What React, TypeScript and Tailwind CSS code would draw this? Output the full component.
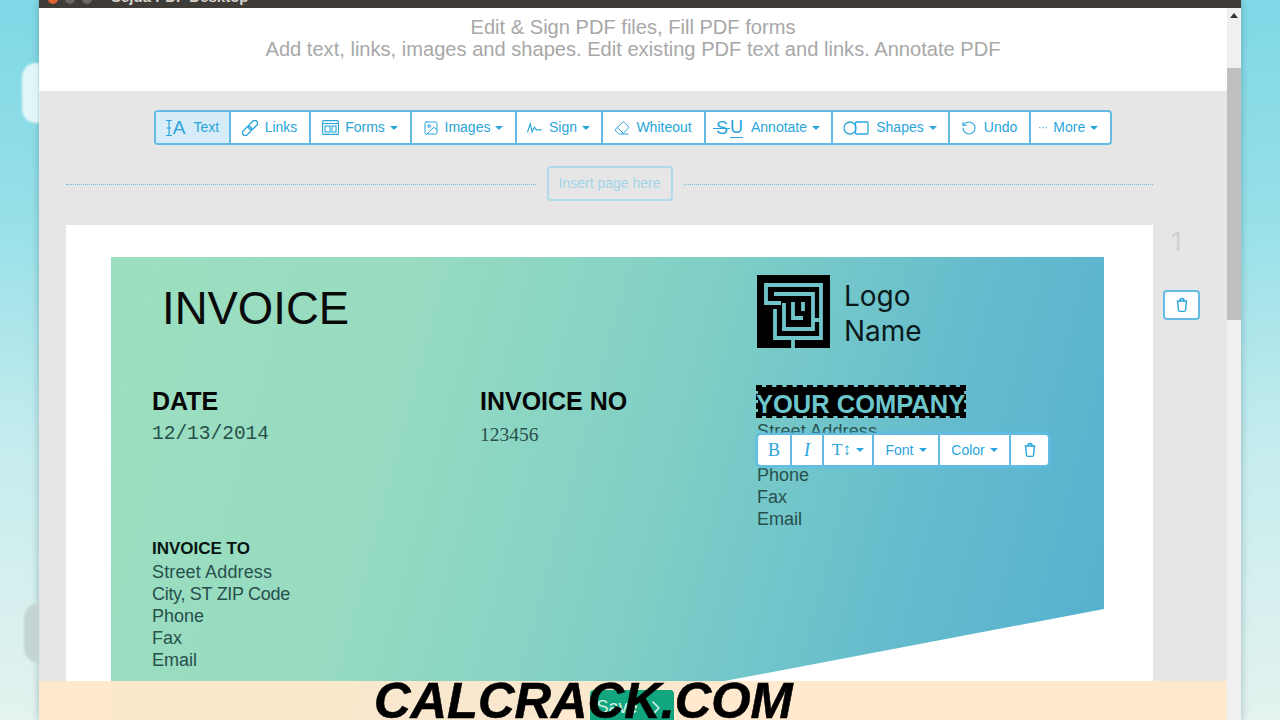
import { ChevronRight, Eraser, Image, RotateCcw } from "lucide-react";
import type { ReactNode } from "react";

function Caret() {
  return <span className="ml-[5px] inline-block h-0 w-0 border-x-[4px] border-t-[4px] border-x-transparent border-t-[#2aa5dc]" />;
}

function TrashIcon({ className }: { className?: string }) {
  return (
    <svg viewBox="0 0 16 18" fill="none" stroke="currentColor" strokeWidth="1.6" className={className}>
      <path d="M2 4.5h12M5.5 4.5c0-2 1-3 2.5-3s2.5 1 2.5 3M3 4.5l1 10.5c.1.8.7 1.3 1.5 1.3h5c.8 0 1.4-.5 1.5-1.3l1-10.5" />
    </svg>
  );
}

function TextIcon() {
  return (
    <span className="flex items-center text-[19px] leading-none">
      <svg viewBox="0 0 8 18" fill="none" stroke="currentColor" strokeWidth="1.2" className="h-[18px] w-[8px]">
        <path d="M1 1.5h6M4 1.5v15M1 16.5h6M2 9h4" />
      </svg>
      <span>A</span>
    </span>
  );
}

function LinkIcon() {
  return (
    <svg viewBox="0 0 16 16" fill="none" stroke="currentColor" strokeWidth="1.3" className="h-[16px] w-[16px]">
      <g transform="rotate(-45 8 8)">
        <rect x="-1.5" y="5.2" width="10.5" height="5.6" rx="2.8" />
        <rect x="7" y="5.2" width="10.5" height="5.6" rx="2.8" />
      </g>
    </svg>
  );
}

function FormsIcon() {
  return (
    <svg viewBox="0 0 17 15" fill="none" stroke="currentColor" strokeWidth="1.1" className="h-[15px] w-[17px]">
      <rect x="0.6" y="0.6" width="15.8" height="13.8" rx="1" />
      <path d="M0.6 3.5h15.8" />
      <rect x="3" y="6" width="5" height="6" />
      <rect x="10" y="6" width="4" height="6" />
    </svg>
  );
}

function SignIcon() {
  return (
    <svg viewBox="0 0 16 12" fill="none" stroke="currentColor" strokeWidth="1.2" className="h-[12px] w-[15px]">
      <path d="M0.5 10.5 3.5 1.5 5.5 10 8 5l2 3h5.5" />
    </svg>
  );
}

function AnnotateIcon() {
  return (
    <span className="relative flex items-center text-[18px] leading-none">
      <span className="relative">
        S<span className="absolute left-[-3px] right-[-2px] top-[9px] h-px bg-[#2aa5dc]" />
      </span>
      <span className="ml-[2px] border-b border-[#2aa5dc] pb-[1px]">U</span>
    </span>
  );
}

function ShapesIcon() {
  return (
    <svg viewBox="0 0 26 14" fill="none" stroke="currentColor" strokeWidth="1.3" className="h-[14px] w-[26px]">
      <circle cx="7" cy="7" r="6" />
      <rect x="12.5" y="1" width="12.5" height="12" rx="1" />
    </svg>
  );
}

type ToolItem = { label: string; icon: ReactNode; caret?: boolean; width: string; active?: boolean; gap: string };

const tools: ToolItem[] = [
  { label: "Text", icon: <TextIcon />, width: "w-[75px]", active: true, gap: "gap-[8px]" },
  { label: "Links", icon: <LinkIcon />, width: "w-[80px]", gap: "gap-[7px]" },
  { label: "Forms", icon: <FormsIcon />, caret: true, width: "w-[101px]", gap: "gap-[6px]" },
  { label: "Images", icon: <Image size={16} strokeWidth={1.5} />, caret: true, width: "w-[105px]", gap: "gap-[6px]" },
  { label: "Sign", icon: <SignIcon />, caret: true, width: "w-[86px]", gap: "gap-[7px]" },
  { label: "Whiteout", icon: <Eraser size={16} strokeWidth={1.5} />, width: "w-[103px]", gap: "gap-[6px]" },
  { label: "Annotate", icon: <AnnotateIcon />, caret: true, width: "w-[127px]", gap: "gap-[8px]" },
  { label: "Shapes", icon: <ShapesIcon />, caret: true, width: "w-[117px]", gap: "gap-[7px]" },
  { label: "Undo", icon: <RotateCcw size={16} strokeWidth={1.6} />, width: "w-[81px]", gap: "gap-[7px]" },
  { label: "More", icon: <span className="text-[11px] leading-none tracking-[-0.5px]">···</span>, caret: true, width: "w-[79px] pr-[4px]", gap: "gap-[6px]" },
];

function Toolbar() {
  return (
    <div className="flex h-[35px] w-[958px] items-stretch overflow-hidden rounded-[4px] border-2 border-[#62bce4] bg-white text-[14px] text-[#2aa5dc]">
      {tools.map((t) => (
        <div
          key={t.label}
          className={`flex shrink-0 items-center justify-center border-r-2 border-[#62bce4] last:border-r-0 ${t.gap} ${t.width} ${t.active ? "bg-[#d6ecf8]" : ""}`}
        >
          {t.icon}
          <span className="flex items-center">
            {t.label}
            {t.caret && <Caret />}
          </span>
        </div>
      ))}
    </div>
  );
}

function FloatingBar() {
  const cell = "flex items-center justify-center border-r-2 border-[#62bce4] last:border-r-0";
  return (
    <div className="absolute left-[645px] top-[176px] flex h-[34px] w-[294px] items-stretch overflow-hidden rounded-[5px] border-2 border-[#62bce4] bg-white text-[14px] text-[#2aa5dc] shadow-[0_0_4px_#5cc0ea]">
      <div className={`${cell} w-[34px] font-['Liberation_Serif',serif] text-[18px]`}>B</div>
      <div className={`${cell} w-[32px] font-['Liberation_Serif',serif] text-[18px] italic`}>I</div>
      <div className={`${cell} w-[50px] text-[15px]`}>
        <span className="font-['Liberation_Serif',serif] text-[17px]">T↕</span>
        <Caret />
      </div>
      <div className={`${cell} w-[66px]`}>Font<Caret /></div>
      <div className={`${cell} w-[71px]`}>Color<Caret /></div>
      <div className={`${cell} flex-1`}>
        <TrashIcon className="h-[16px] w-[14px]" />
      </div>
    </div>
  );
}

function LogoMark() {
  return (
    <svg viewBox="0 0 73 73" className="h-[73px] w-[73px] shrink-0">
      <rect width="73" height="73" fill="#000" />
      <g fill="none" stroke="#6fc6ca" strokeWidth="3.8">
        <path d="M36 73V63H64V10H9V28H24" />
        <path d="M18 34V63H36" />
        <path d="M17 19H56V54H27V28" />
        <path d="M56 45H64" />
        <path d="M36 27V43H46" />
        <path d="M46 27V36" />
      </g>
    </svg>
  );
}

const bodyText = "text-[18px] leading-[22px] text-[#27504c]";

export default function App() {
  return (
    <div className="relative flex h-[720px] w-[1280px] overflow-hidden bg-[linear-gradient(180deg,#7fd8e6_0%,#97e0e8_30%,#c5ecee_62%,#e4f3ef_100%)] font-['Liberation_Sans',Arial,sans-serif]">
      <div className="flex w-[39px] shrink-0 flex-col items-end pt-[63px]">
        <div className="h-[60px] w-[17px] rounded-l-[14px] bg-white/75 blur-[1px]" />
        <div className="mt-[480px] h-[60px] w-[15px] rounded-l-full bg-[#c4d4d2] blur-[1px]" />
      </div>

      <div className="flex w-[1202px] shrink-0 flex-col shadow-[0_0_8px_rgba(60,100,110,0.4)]">
        <div className="flex h-[8px] shrink-0 items-start gap-[7px] bg-[#3f3c38] pl-[9px]">
          <span className="mt-[-6px] h-[10px] w-[10px] rounded-full bg-[#e0622e]" />
          <span className="mt-[-6px] h-[10px] w-[10px] rounded-full bg-[#6b6862]" />
          <span className="mt-[-6px] h-[10px] w-[10px] rounded-full bg-[#6b6862]" />
          <span className="ml-[12px] mt-[-11px] text-[15px] font-bold leading-[16px] text-[#d8d4cc]">Sejda PDF Desktop</span>
        </div>

        <div className="flex min-h-0 flex-1">
          <div className="flex w-[1188px] shrink-0 flex-col">
            <div className="h-[83px] shrink-0 bg-white pt-[8px] text-center text-[20.1px] leading-[22px] text-[#a8a8a8]">
              <p>Edit &amp; Sign PDF files, Fill PDF forms</p>
              <p>Add text, links, images and shapes. Edit existing PDF text and links. Annotate PDF</p>
            </div>

            <div className="flex min-h-0 flex-1 flex-col bg-[#e6e6e6] pt-[19px]">
              <div className="flex justify-center pr-px">
                <Toolbar />
              </div>

              <div className="mt-[21px] ml-[27px] flex w-[1087px] items-center gap-[11px]">
                <div className="mt-px flex-1 border-t border-dotted border-[#6fbfe0]" />
                <div className="flex h-[35px] w-[126px] items-center justify-center rounded-[4px] border-2 border-[#b0d9ea] text-[14px] text-[#a4d4ea]">
                  Insert page here
                </div>
                <div className="mt-px flex-1 border-t border-dotted border-[#6fbfe0]" />
              </div>

              <div className="mt-[24px] flex min-h-0 flex-1">
                <div className="ml-[27px] w-[1087px] shrink-0 bg-white px-[45px] pt-[32px]">
                  <div className="relative h-[463px] w-[993px] bg-[linear-gradient(105deg,#9cdfc0_0%,#97dbc1_28%,#7fcfc6_55%,#66bccd_78%,#54b0d0_100%)] [clip-path:polygon(0_0,100%_0,100%_352px,409px_100%,0_100%)]">
                    <div className="flex h-[128px] pl-[51px]">
                      <h1 className="mt-[24px] w-[595px] text-[45.5px] leading-[56px] text-[#0a0a0a]">INVOICE</h1>
                      <div className="mt-[18px] flex gap-[14px]">
                        <LogoMark />
                        <p className="mt-[4px] font-['Inter',sans-serif] text-[28px] leading-[35px] text-[#0a1a1a]">
                          Logo
                          <br />
                          Name
                        </p>
                      </div>
                    </div>

                    <div className="grid grid-cols-[328px_276px_1fr] pl-[41px]">
                      <div>
                        <p className="mt-px text-[25px] font-bold leading-[30px] text-[#050505]">DATE</p>
                        <p className="mt-[6px] font-['Liberation_Mono',monospace] text-[19.5px] leading-[24px] text-[#27504c]">12/13/2014</p>
                        <p className="mt-[92px] text-[17px] font-bold leading-[22px] text-[#071512]">INVOICE TO</p>
                        <div className={`mt-px ${bodyText}`}>
                          <p className="tracking-[0.15px]">Street Address</p>
                          <p className="tracking-[-0.3px]">City, ST ZIP Code</p>
                          <p>Phone</p>
                          <p>Fax</p>
                          <p>Email</p>
                        </div>
                      </div>
                      <div>
                        <p className="mt-px text-[25px] font-bold leading-[30px] text-[#050505]">INVOICE NO</p>
                        <p className="mt-[7px] font-['Liberation_Serif',serif] text-[19.5px] leading-[24px] text-[#27504c]">123456</p>
                      </div>
                      <div>
                        <p className="h-[33px] w-[210px] whitespace-nowrap border-2 border-dashed border-black bg-black bg-clip-padding text-[25.5px] font-bold leading-[34px] text-[#6cc6cc]">
                          <span className="-ml-[2px]">YOUR COMPANY</span>
                        </p>
                        <div className={`mt-[2px] ml-px ${bodyText}`}>
                          <p className="tracking-[0.15px]">Street Address</p>
                          <p className="tracking-[-0.3px]">City, ST ZIP Code</p>
                          <p>Phone</p>
                          <p>Fax</p>
                          <p>Email</p>
                        </div>
                      </div>
                    </div>

                    <FloatingBar />
                  </div>
                </div>

                <div className="flex flex-1 flex-col items-start">
                  <p className="ml-[18px] font-['Inter',sans-serif] text-[26px] leading-[34px] text-[#d0d0d0]">1</p>
                  <div className="ml-[10px] mt-[31px] flex h-[30px] w-[37px] items-center justify-center rounded-[4px] border-2 border-[#62bce4] bg-white text-[#2aa5dc]">
                    <TrashIcon className="h-[16px] w-[14px]" />
                  </div>
                </div>
              </div>
            </div>
          </div>

          <div className="flex w-[14px] shrink-0 flex-col items-center bg-[#f0f0f0]">
            <div className="mt-[5px] h-0 w-0 border-x-[4px] border-b-[5px] border-x-transparent border-b-[#333]" />
            <div className="mt-[50px] h-[252px] w-full bg-[#c0c0c0]" />
          </div>
        </div>
      </div>

      <div className="absolute bottom-0 left-[39px] h-[39px] w-[1188px] overflow-hidden bg-[#ffe9ce]/95">
        <div className="absolute left-[551px] top-[9px] flex h-[40px] w-[84px] items-start justify-center gap-[6px] rounded-[4px] bg-[#12a67e] pt-[6px] text-[18px] leading-[22px] text-[#d8f3ea]">
          Save
          <ChevronRight size={24} strokeWidth={1.6} />
        </div>
        <p className="absolute left-[335px] top-[-9px] whitespace-nowrap text-[50.6px] font-bold italic leading-[58px] text-black [-webkit-text-stroke:0.6px_black]">CALCRACK.COM</p>
      </div>
    </div>
  );
}
